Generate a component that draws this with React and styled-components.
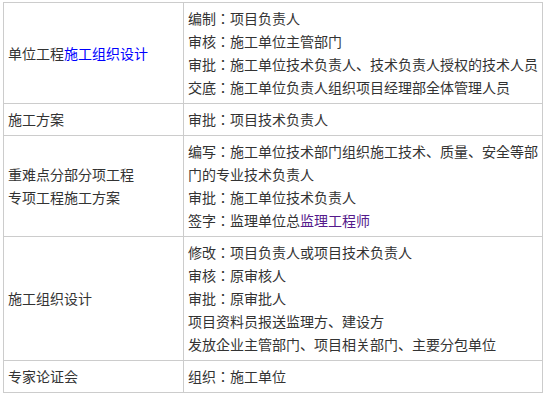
import React from 'react'
import styled, { createGlobalStyle } from 'styled-components'

const Global = createGlobalStyle`
  html, body {
    margin: 0;
    padding: 0;
    background: #fff;
  }
`;

const Page = styled.div`
  padding: 2px 0 0 3px;
`;

const Table = styled.table`
  width: 540px;
  border-collapse: collapse;
  table-layout: fixed;
  font-family: "Noto Sans CJK JP", "Noto Sans CJK SC", "Liberation Sans", sans-serif;
  font-size: 14px;
  line-height: 23px;
  color: #333;

  td {
    border: 1px solid #ccc;
    padding: 4px 4px;
    vertical-align: middle;
    white-space: nowrap;
  }
`;

const Link = styled.a`
  color: ${p => (p.visited ? '#551a8b' : '#0000ff')};
  text-decoration: none;
`;

const Line = styled.div``;

const rows = [
  {
    title: <>单位工程<Link href="#">施工组织设计</Link></>,
    lines: [
      '编制：项目负责人',
      '审核：施工单位主管部门',
      '审批：施工单位技术负责人、技术负责人授权的技术人员',
      '交底：施工单位负责人组织项目经理部全体管理人员',
    ],
  },
  { title: '施工方案', lines: ['审批：项目技术负责人'] },
  {
    title: <>重难点分部分项工程<br />专项工程施工方案</>,
    lines: [
      '编写：施工单位技术部门组织施工技术、质量、安全等部',
      '门的专业技术负责人',
      '审批：施工单位技术负责人',
      <>签字：监理单位总<Link href="#" visited>监理工程师</Link></>,
    ],
  },
  {
    title: '施工组织设计',
    lines: [
      '修改：项目负责人或项目技术负责人',
      '审核：原审核人',
      '审批：原审批人',
      '项目资料员报送监理方、建设方',
      '发放企业主管部门、项目相关部门、主要分包单位',
    ],
  },
  { title: '专家论证会', lines: ['组织：施工单位'] },
];

export default function App() {
  return (
    <Page>
      <Global />
      <Table>
        <colgroup>
          <col style={{ width: 180 }} />
          <col />
        </colgroup>
        <tbody>
          {rows.map((r, i) => (
            <tr key={i}>
              <td>{r.title}</td>
              <td>
                {r.lines.map((l, j) => <Line key={j}>{l}</Line>)}
              </td>
            </tr>
          ))}
        </tbody>
      </Table>
    </Page>
  );
}
